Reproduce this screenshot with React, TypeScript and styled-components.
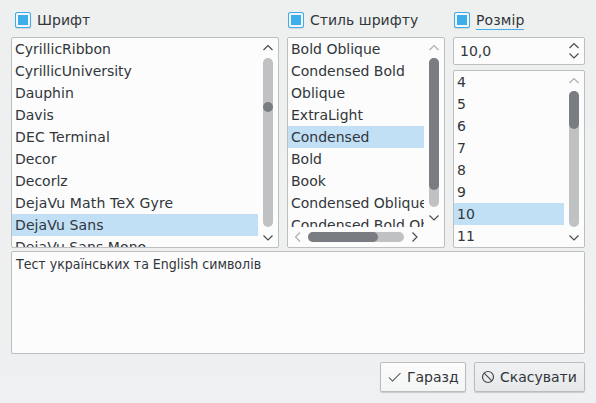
import React from 'react';
import styled, { createGlobalStyle, css } from 'styled-components';

const GlobalStyle = createGlobalStyle`
  * { box-sizing: border-box; }
  body {
    margin: 0;
    background: #eff0f1;
    color: #31363b;
    font: 14px/22px "DejaVu Sans", sans-serif;
    overflow: hidden;
  }
`;

const frame = css`
  background: #fcfcfc;
  border: 1px solid #bcbebf;
  border-radius: 2px;
`;

const Dialog = styled.main`
  width: 596px;
  height: 403px;
  padding: 9px 11px 11px;
  display: flex;
  flex-direction: column;
  background: linear-gradient(#eef0f0, #eff0f1);
`;

const Columns = styled.div`
  display: grid;
  grid-template-columns: 268px 158px 132px;
  column-gap: 8px;
  height: 239px;
`;

const Column = styled.section`
  display: flex;
  flex-direction: column;
  min-width: 0;
  min-height: 0;
`;

const Heading = styled.label<{ $inset: number }>`
  display: flex;
  align-items: center;
  gap: 6px;
  height: 22px;
  flex: none;
  margin-bottom: 6px;
  padding-left: ${(p) => p.$inset}px;
  white-space: nowrap;
`;

const Check = styled.span`
  width: 16px;
  height: 16px;
  border: 1px solid #3daee9;
  border-radius: 2px;
  background: #3daee9;
  box-shadow: inset 0 0 0 2px #f4f6f7, 0 1px 1px #d4d7d9;
`;

const HeadingText = styled.span<{ $focused?: boolean }>`
  height: 20px;
  line-height: 20px;
  letter-spacing: ${(p) => (p.$focused ? 0.1 : 0.03)}px;
  box-shadow: ${(p) => (p.$focused ? '0 -1px 0 #3daee9 inset' : 'none')};
`;

const SpinBox = styled.div`
  ${frame}
  height: 28px;
  flex: none;
  margin-bottom: 5px;
  padding: 0 5px 0 6px;
  display: flex;
  align-items: center;
  justify-content: space-between;
`;

const SpinArrows = styled.div`
  display: flex;
  flex-direction: column;
  gap: 4px;
`;

const Panel = styled.div<{ $horizontal?: boolean }>`
  ${frame}
  flex: 1;
  min-height: 0;
  display: grid;
  grid-template-columns: minmax(0, 1fr) 20px;
  grid-template-rows: minmax(0, 1fr) ${(p) => (p.$horizontal ? '20px' : '')};
`;

const List = styled.ul`
  margin: 0;
  padding: 0;
  list-style: none;
  overflow: hidden;
`;

const Item = styled.li<{ $selected: boolean; $tracking: number }>`
  height: 22px;
  padding-left: 3px;
  white-space: nowrap;
  letter-spacing: ${(p) => p.$tracking}px;
  background: ${(p) => (p.$selected ? '#c1e0f5' : 'transparent')};
`;

const VBar = styled.div`
  display: grid;
  grid-template-rows: 20px minmax(0, 1fr) 20px;
  justify-items: center;
`;

const HBar = styled.div`
  display: grid;
  grid-template-columns: 20px minmax(0, 1fr) 20px;
  align-items: center;
`;

const ArrowCell = styled.div<{ $end?: 'v' | 'h' }>`
  width: 20px;
  height: 20px;
  padding-top: ${(p) => (p.$end === 'v' ? 2 : 0)}px;
  padding-left: ${(p) => (p.$end === 'h' ? 2 : 0)}px;
  display: grid;
  place-items: center;
`;

const VTrack = styled.div<{ $start: number }>`
  width: 10px;
  height: 100%;
  padding-top: ${(p) => p.$start}px;
  border-radius: 5px;
  background: #c0c1c2;
`;

const HTrack = styled.div`
  height: 10px;
  border-radius: 5px;
  background: #c0c1c2;
`;

const Thumb = styled.div<{ $w: number; $h: number }>`
  width: ${(p) => p.$w}px;
  height: ${(p) => p.$h}px;
  border-radius: 5px;
  background: #797c80;
`;

const Preview = styled.div`
  ${frame}
  height: 103px;
  margin-top: 3px;
  padding: 1px 4px;
  font-family: "DejaVu Sans Condensed", "DejaVu Sans", sans-serif;
  font-stretch: condensed;
`;

const Actions = styled.footer`
  display: flex;
  justify-content: flex-end;
  gap: 8px;
  margin-top: 8px;
`;

const Button = styled.button<{ $width: number; $active?: boolean }>`
  width: ${(p) => p.$width}px;
  height: 30px;
  padding: 0 0 0 6px;
  display: flex;
  align-items: center;
  gap: 4px;
  color: inherit;
  font: inherit;
  white-space: nowrap;
  border: 1px solid #babcbe;
  border-radius: 2px;
  background: ${(p) => (p.$active ? 'linear-gradient(#f0f1f2, #e7e8ea)' : 'linear-gradient(#fcfcfc, #f3f4f4)')};
  box-shadow: 0 1px 1px #c9cbcc;
`;

const Icon = styled.svg`
  display: block;
  flex: none;
  fill: none;
  overflow: visible;
`;

type Direction = 'up' | 'down' | 'left' | 'right';

const chevrons: Record<Direction, string> = {
  up: 'M.5 5 5 .5 9.500 5',
  down: 'M.5 .5 5 5 9.500 .5',
  left: 'M5 .5 .5 5 5 9.500',
  right: 'M.5 .5 5 5 .5 9.500',
};

function Chevron({ dir, dim }: { dir: Direction; dim?: boolean }) {
  const upright = dir === 'up' || dir === 'down';
  return (
    <Icon width={upright ? 10 : 6} height={upright ? 6 : 10} stroke={dim ? '#acaeb0' : '#45494d'} strokeWidth="1.15">
      <path d={chevrons[dir]} />
    </Icon>
  );
}

interface ScrollListProps {
  items: string[];
  selected: string;
  start?: number;
  thumb: number;
  dimUp?: boolean;
  horizontal?: boolean;
}

const tracking: Record<string, number> = {
  CyrillicUniversity: -0.05,
  'DEC Terminal': 0.18,
  'DejaVu Math TeX Gyre': 0.15,
  'DejaVu Sans': 0.1,
  'DejaVu Sans Mono': 0.08,
};

function ScrollList({ items, selected, start = 0, thumb, dimUp, horizontal }: ScrollListProps) {
  return (
    <Panel $horizontal={horizontal}>
      <List>
        {items.map((name) => (
          <Item key={name} $selected={name === selected} $tracking={tracking[name] ?? 0}>{name}</Item>
        ))}
      </List>
      <VBar>
        <ArrowCell><Chevron dir="up" dim={dimUp} /></ArrowCell>
        <VTrack $start={start}><Thumb $w={10} $h={thumb} /></VTrack>
        <ArrowCell $end="v"><Chevron dir="down" /></ArrowCell>
      </VBar>
      {horizontal && (
        <HBar>
          <ArrowCell><Chevron dir="left" dim /></ArrowCell>
          <HTrack><Thumb $w={70} $h={10} /></HTrack>
          <ArrowCell $end="h"><Chevron dir="right" /></ArrowCell>
        </HBar>
      )}
    </Panel>
  );
}

const families = [
  'CyrillicRibbon', 'CyrillicUniversity', 'Dauphin', 'Davis', 'DEC Terminal',
  'Decor', 'Decorlz', 'DejaVu Math TeX Gyre', 'DejaVu Sans', 'DejaVu Sans Mono',
];
const styles = [
  'Bold Oblique', 'Condensed Bold', 'Oblique', 'ExtraLight', 'Condensed',
  'Bold', 'Book', 'Condensed Oblique', 'Condensed Bold Oblique',
];
const sizes = ['4', '5', '6', '7', '8', '9', '10', '11'];

export default function App() {
  return (
    <>
      <GlobalStyle />
      <Dialog>
        <Columns>
          <Column>
            <Heading $inset={4}><Check /><HeadingText>Шрифт</HeadingText></Heading>
            <ScrollList items={families} selected="DejaVu Sans" start={44} thumb={10} />
          </Column>
          <Column>
            <Heading $inset={1}><Check /><HeadingText>Стиль шрифту</HeadingText></Heading>
            <ScrollList items={styles} selected="Condensed" thumb={132} dimUp horizontal />
          </Column>
          <Column>
            <Heading $inset={1}><Check /><HeadingText $focused>Розмір</HeadingText></Heading>
            <SpinBox>
              <span>10,0</span>
              <SpinArrows><Chevron dir="up" /><Chevron dir="down" /></SpinArrows>
            </SpinBox>
            <ScrollList items={sizes} selected="10" thumb={38} dimUp />
          </Column>
        </Columns>
        <Preview>Тест українських та English символів</Preview>
        <Actions>
          <Button $width={86}>
            <Icon width="16" height="16" stroke="#45494d" strokeWidth="1.05">
              <path d="M2 8.500 5.500 12 13.500 4" />
            </Icon>
            Гаразд
          </Button>
          <Button $width={111} $active>
            <Icon width="15" height="14" stroke="#45494d" strokeWidth="1.2">
              <circle cx="7" cy="7" r="5.500" />
              <path d="M3.100 3.100 10.900 10.900" />
            </Icon>
            Скасувати
          </Button>
        </Actions>
      </Dialog>
    </>
  );
}
